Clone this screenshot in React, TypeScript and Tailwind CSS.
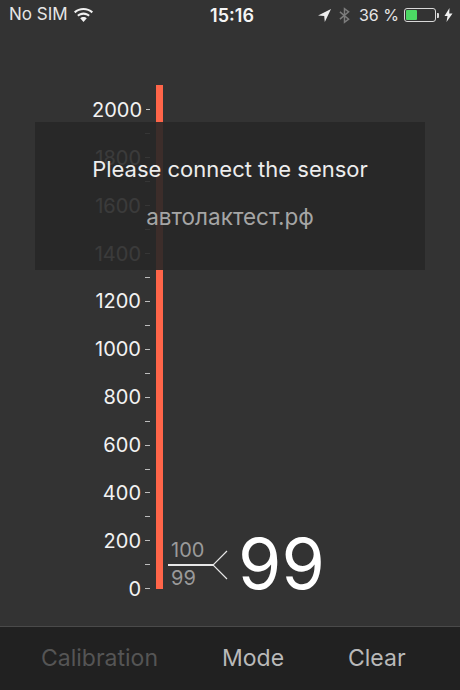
const ticks = [2000, 0, 1800, 0, 1600, 0, 1400, 0, 1200, 0, 1000, 0, 800, 0, 600, 0, 400, 0, 200, 0, 0];

function StatusBar() {
  return (
    <div className="flex h-[30px] items-center justify-between pl-[9px] pr-[7px] text-[17px] text-[#e6e6e6]">
      <div className="flex w-[172px] items-center gap-[6px]">
        <span>No SIM</span>
        <svg width="19" height="15" viewBox="0 0 19 15" fill="#f0f0f0">
          <path d="M9.5 0C5.9 0 2.6 1.3 0 3.6l1.4 1.6C3.6 3.2 6.4 2.1 9.5 2.1s5.9 1.1 8.1 3.1L19 3.6C16.4 1.3 13.1 0 9.5 0z" />
          <path d="M9.5 4.6c-2.4 0-4.6.9-6.3 2.4l1.4 1.6c1.3-1.2 3-1.9 4.9-1.9s3.6.7 4.9 1.9L15.8 7c-1.7-1.5-3.9-2.4-6.3-2.4z" />
          <path d="M9.5 9c-1.3 0-2.4.5-3.3 1.3L9.5 14l3.3-3.7C11.900 9.500 10.800 9 9.500 9z" />
        </svg>
      </div>
      <span className="text-[18px] font-semibold text-[#f5f5f5]">15:16</span>
      <div className="flex w-[170px] items-center justify-end">
        <svg width="13" height="13" viewBox="0 0 13 13" fill="#ededed" className="mr-[8px]">
          <path d="M13 0 0 6.600 6.200 7 6.800 13z" />
        </svg>
        <svg width="11" height="17" viewBox="0 0 12 17" fill="none" stroke="#7c7c7c" strokeWidth="1.600" className="mr-[9px]">
          <path d="M1 4.500 10.500 12.500 6 16V1l4.500 3.500L1 12.500" />
        </svg>
        <span className="mr-[5px] text-[16px]">36 %</span>
        <div className="flex h-[14px] w-[32px] rounded-[3px] border border-[#d8d8d8] p-[1px]">
          <div className="w-[11px] rounded-[1px] bg-[#4cd964]" />
        </div>
        <div className="ml-[1px] mr-[5px] h-[5px] w-[2px] rounded-r-[1px] bg-[#d8d8d8]" />
        <svg width="9" height="14" viewBox="0 0 8 14" fill="#f0f0f0">
          <path d="M5 0 0 8h3l-1 6 6-8.500H4.700z" />
        </svg>
      </div>
    </div>
  );
}

function Scale() {
  return (
    <div className="flex pl-[92px]">
      <div className="mt-[13px] flex w-[64px] flex-col">
        {ticks.map((value, i) => (
          <div key={i} className="flex h-[23.95px] items-center justify-end">
            {i % 2 === 0 && <span className="mr-[4px] text-[20px] leading-none text-[#f2f2f2]">{value}</span>}
            <div className="mr-[6px] h-[1px] w-[5px] bg-[#bdbdbd]" />
          </div>
        ))}
      </div>
      <div className="h-[504px] w-[7px] bg-[#ff6549]" />
      <div className="mt-[452px] flex items-start pl-[5px]">
        <div className="w-[46px]">
          <div className="pl-[3px] text-[20px] leading-[26px] text-[#9a9a9a]">100</div>
          <div className="mt-[1px] h-[2px] w-[46px] bg-[#e8e8e8]" />
          <div className="pl-[3px] text-[20px] leading-[24px] text-[#9a9a9a]">99</div>
        </div>
        <svg width="15" height="30" viewBox="0 0 15 30" fill="none" stroke="#e8e8e8" strokeWidth="1.200" className="mt-[13px] -ml-[1px]">
          <path d="M14 1 0 15l14 14" />
        </svg>
        <div className="ml-[10px] mt-[-13px] text-[70px] leading-[80px] text-white">99</div>
      </div>
    </div>
  );
}

export default function App() {
  return (
    <div className="relative flex h-[690px] w-[460px] flex-col overflow-hidden bg-[#333333] font-['Inter',sans-serif]">
      <StatusBar />
      <div className="flex-1 pt-[55px]">
        <Scale />
      </div>
      <div className="flex h-[64px] items-center border-t border-[#4a4a4a] bg-[#212121] pb-[1px] text-[23px]">
        <span className="ml-[41px] w-[181px] text-[#555555]">Calibration</span>
        <span className="w-[126px] text-[#b9b9b9]">Mode</span>
        <span className="text-[#b9b9b9]">Clear</span>
      </div>
      <div className="absolute left-[35px] top-[122px] flex h-[148px] w-[390px] flex-col items-center bg-[#272727]/90 pt-[33px]">
        <div className="text-[22px] leading-[28px] text-[#ededed]">Please connect the sensor</div>
        <div className="mt-[20px] text-[22.5px] leading-[28px] text-[#a5a5a5]">автолактест.рф</div>
      </div>
    </div>
  );
}
